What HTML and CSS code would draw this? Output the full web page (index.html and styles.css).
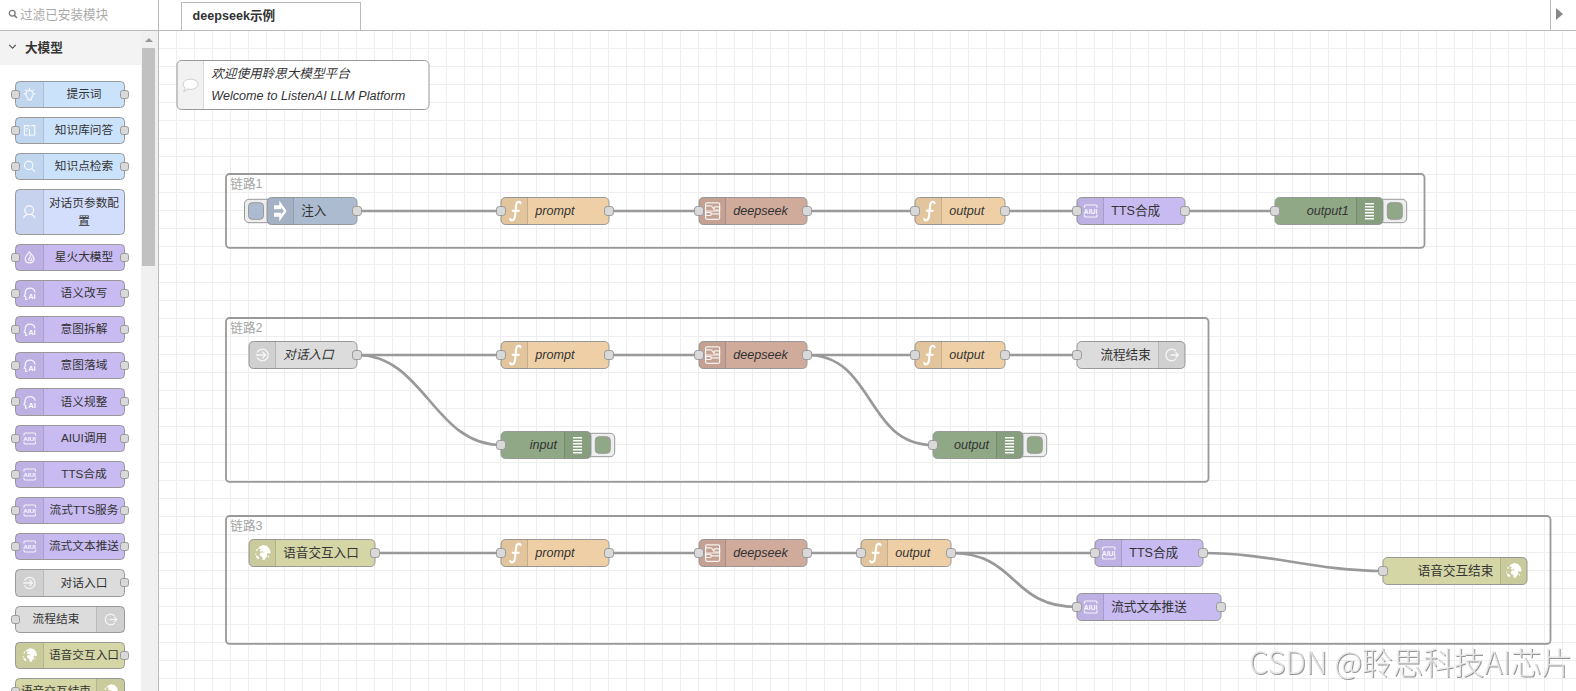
FILE: index.html
```html
<!DOCTYPE html>
<html lang="zh-CN">
<head>
<meta charset="utf-8">
<title>deepseek示例</title>
<link rel="stylesheet" href="styles.css">
</head>
<body>
<svg class="defs" width="0" height="0" aria-hidden="true">
  <defs>
    <symbol id="i-inject" viewBox="0 0 27 27"><path fill="#fff" fill-rule="evenodd" d="M7 7.8H12.3V3L19.6 13.5L12.3 24V19.2H7V15.3H14.2V17.2L16.8 13.5L14.2 9.8V11.7H7Z"/></symbol>
    <symbol id="i-fn" viewBox="0 0 27 27"><g fill="none" stroke="#fff" stroke-width="2.1" stroke-linecap="round"><path d="M19.6 5.6C19.2 3.8 15.8 3.6 15.2 7.2L13.9 19.5C13.4 23.3 9.8 23.6 9.2 21.6"/><path stroke-linecap="butt" d="M10.8 13.3H18.6"/></g></symbol>
    <symbol id="i-sub" viewBox="0 0 27 27"><g fill="none" stroke="#fff" stroke-opacity=".85" stroke-width="1.2"><rect x="6.6" y="5.4" width="14" height="16.4" rx="1.2"/><path d="M7 8.3H11.5Q13 8.3 13.4 9.6Q13.8 10.9 15 10.9M12 16.4H20.5M7 13.5H20.5"/><rect x="15" y="9.3" width="5.6" height="3.2" rx=".8"/><rect x="6.6" y="14.8" width="5.4" height="3.2" rx=".8"/></g></symbol>
    <symbol id="i-debug" viewBox="0 0 27 27"><path stroke="#fff" stroke-width="1.4" d="M9 6.3h9M9 9.3h9M9 12.3h9M9 15.3h9M9 18.3h9M9 21.3h9"/></symbol>
    <symbol id="i-aiui" viewBox="0 0 27 27"><g fill="none" stroke="#fff" stroke-opacity=".85" stroke-width="1.2"><path d="M7.5 10.3V8.8Q7.5 7.5 8.8 7.5H18.7Q20 7.5 20 8.8V10.3M7.5 17V18.2Q7.5 19.5 8.8 19.5H18.7Q20 19.5 20 18.2V17"/></g><text class="tiny" x="6.8" y="16.1" textLength="13.6" lengthAdjust="spacingAndGlyphs">AIUI</text></symbol>
    <symbol id="i-ai" viewBox="0 0 27 27"><path fill="none" stroke="#fff" stroke-opacity=".85" stroke-width="1.3" d="M11.2 19.8H9.4V17.2L7.8 16.4L8.9 13.6C8.4 9.6 10.8 7.8 14 7.8C17 7.8 19 9.6 19.4 12.2"/><text class="tiny ai" x="12.2" y="19.8" textLength="8" lengthAdjust="spacingAndGlyphs">AI</text></symbol>
    <symbol id="i-in" viewBox="0 0 27 27"><g fill="none" stroke="#fff" stroke-opacity=".8" stroke-width="1.3"><path d="M8.2 11A5.8 5.8 0 1 1 8.2 16M7 13.5H16.4M13.4 10.3L16.6 13.5L13.4 16.7"/></g></symbol>
    <symbol id="i-out" viewBox="0 0 27 27"><g fill="none" stroke="#fff" stroke-opacity=".8" stroke-width="1.3"><path d="M18 9.6A5.8 5.8 0 1 0 18 17.4M12.6 13.5H20.2M17.6 10.8L20.4 13.5L17.6 16.2"/></g></symbol>
    <symbol id="i-globe" viewBox="0 0 27 27"><path fill="#fff" d="M10.4 7.2L14 5.6L18 6.6L20.6 9.4L21.6 13.2L20 14.6L19.2 13.2L17.8 14.6L18.6 16.4L16.6 18.6L15.6 20.6L13.6 20.2L13.4 17.4L11.2 16.6L10.6 14.4L12.6 12.8L15.6 13.2L13.4 11.8L11.6 12.2L10.6 10.8L12.4 9.4L9.2 9.2Z"/><path fill="#fff" d="M7.2 9.8l1.4-.6.2 1.6-1.4 1zM6 14.4l1.1-.6.4 1-.9.8zM6.6 16.4l1.6-.3 2 1.9-.5 1.6-1.6-.6zM19 17l1-.7.1 1.2-1 .9z"/></symbol>
    <symbol id="i-bulb" viewBox="0 0 27 27"><g fill="none" stroke="#fff" stroke-opacity=".85" stroke-width="1.2"><path d="M11.7 17.2C8.2 14.6 9.4 9 13.5 9S18.8 14.6 15.3 17.2V19.3H11.7ZM13.5 6.5V8M7 12.8H8.8M18.2 12.8H20M8.6 8.2L9.8 9.4M18.4 8.2L17.2 9.4"/></g></symbol>
    <symbol id="i-book" viewBox="0 0 27 27"><g fill="none" stroke="#fff" stroke-opacity=".85" stroke-width="1.2"><path d="M12 18.3H8V8.2H13V10M13.5 12V19.3M15 8.2H19.2V18.3H14.5L13.5 19.3M9.5 11.3H12M9.5 13.5H10.8"/></g></symbol>
    <symbol id="i-search" viewBox="0 0 27 27"><g fill="none" stroke="#fff" stroke-opacity=".85" stroke-width="1.3"><circle cx="12.6" cy="12.3" r="4.5"/><path d="M15.9 15.6L19.5 19.3"/></g></symbol>
    <symbol id="i-user" viewBox="0 0 27 27"><g fill="none" stroke="#fff" stroke-opacity=".85" stroke-width="1.3"><circle cx="13.2" cy="11.7" r="4.4"/><path d="M7.5 19.5C8.3 17.6 9.8 16.5 11.2 15.9M15.2 15.9C17 16.5 18.2 17.6 19 19.5"/></g></symbol>
    <symbol id="i-fire" viewBox="0 0 27 27"><g fill="none" stroke="#fff" stroke-opacity=".85" stroke-width="1.3"><path d="M13 7C13.5 9.3 8.7 11 8.8 14.9C8.9 17.8 11 19.4 13.6 19.4C16.4 19.4 18.5 17.6 18.4 14.7C18.3 12 15.5 10.6 13 7ZM14.2 10.6C15.4 13.6 12.6 14.4 12.2 16.6M15.8 13.8C16.5 16 15 17.2 13.4 17"/></g></symbol>
    <symbol id="i-comment" viewBox="0 0 27 27"><path fill="#fff" stroke="#ccc" stroke-width="1" d="M14 7.7C18 7.7 21.2 9.8 21.2 12.8S18 17.8 14 17.8C12.9 17.8 11.9 17.7 11 17.4C9.9 18.9 8.3 19.8 6.6 19.9C7.7 18.9 8.3 17.8 8.4 16.4C7 15.5 6.3 14.2 6.3 12.8C6.3 9.8 9.7 7.7 14 7.7Z"/></symbol>
    <symbol id="port" viewBox="0 0 10 10"><rect x=".5" y=".5" width="9" height="9" rx="2.7" fill="#d9d9d9" stroke="#999"/></symbol>
    <pattern id="grid" width="18" height="18" patternUnits="userSpaceOnUse" x="176" y="48"><path fill="#eee" d="M0 0H18V1H1V18H0Z"/></pattern>
  </defs>
</svg>

<div class="editor">
  <aside class="palette">
    <div class="search">
      <svg width="10" height="10" viewBox="0 0 10 10"><circle cx="4.2" cy="4.2" r="2.9" fill="none" stroke="#777" stroke-width="1.3"/><path d="M6.3 6.3L9 9" stroke="#777" stroke-width="1.5"/></svg>
      <span>过滤已安装模块</span>
    </div>
    <div class="scroll">
      <div class="list">
        <div class="category"><svg width="9" height="6" viewBox="0 0 9 6"><path d="M1.2 .8L4.5 4.2L7.8 .8" fill="none" stroke="#555" stroke-width="1.2"/></svg><b>大模型</b></div>
        <div class="nodes">
          <div class="pn blue in out"><svg><use href="#i-bulb"/></svg><span>提示词</span></div>
          <div class="pn blue in out"><svg><use href="#i-book"/></svg><span>知识库问答</span></div>
          <div class="pn blue in out"><svg><use href="#i-search"/></svg><span>知识点检索</span></div>
          <div class="pn peri double"><svg><use href="#i-user"/></svg><span>对话页参数配<br>置</span></div>
          <div class="pn purple in out"><svg><use href="#i-fire"/></svg><span>星火大模型</span></div>
          <div class="pn purple in out"><svg><use href="#i-ai"/></svg><span>语义改写</span></div>
          <div class="pn purple in out"><svg><use href="#i-ai"/></svg><span>意图拆解</span></div>
          <div class="pn purple in out"><svg><use href="#i-ai"/></svg><span>意图落域</span></div>
          <div class="pn purple in out tall"><svg><use href="#i-ai"/></svg><span>语义规整</span></div>
          <div class="pn purple in out"><svg><use href="#i-aiui"/></svg><span>AIUI调用</span></div>
          <div class="pn purple in out"><svg><use href="#i-aiui"/></svg><span>TTS合成</span></div>
          <div class="pn purple in out"><svg><use href="#i-aiui"/></svg><span>流式TTS服务</span></div>
          <div class="pn purple in out"><svg><use href="#i-aiui"/></svg><span>流式文本推送</span></div>
          <div class="pn gray out tall"><svg><use href="#i-in"/></svg><span>对话入口</span></div>
          <div class="pn gray in right"><svg><use href="#i-out"/></svg><span>流程结束</span></div>
          <div class="pn olive out"><svg><use href="#i-globe"/></svg><span>语音交互入口</span></div>
          <div class="pn olive in right"><svg><use href="#i-globe"/></svg><span>语音交互结束</span></div>
        </div>
      </div>
      <div class="scrollbar"><i class="up"></i><i class="thumb"></i></div>
    </div>
  </aside>

  <main class="workspace">
    <div class="tabs"><div class="tab">deepseek示例</div><div class="tab-next"><i></i></div></div>
    <svg class="canvas" viewBox="159 31 1417 660">
      <rect x="159" y="31" width="1417" height="660" fill="url(#grid)"/>

      <g class="group">
        <rect x="226" y="174" width="1198.5" height="73.8" rx="3.6"/><text x="230.3" y="188">链路1</text>
        <rect x="226" y="318" width="982.5" height="163.8" rx="3.6"/><text x="230.3" y="332">链路2</text>
        <rect x="226" y="516" width="1324.5" height="127.8" rx="3.6"/><text x="230.3" y="530">链路3</text>
      </g>

      <g class="wire">
        <path d="M357 211H501M609 211H699M807 211H915M1005 211H1077M1185 211H1275"/>
        <path d="M357 355H501M609 355H699M807 355H915M1005 355H1077"/>
        <path d="M357 355C424.5 355 433.5 445 501 445M807 355C874.5 355 865.5 445 933 445"/>
        <path d="M375 553H501M609 553H699M807 553H861M951 553H1095"/>
        <path d="M951 553C1018.5 553 1009.5 607 1077 607M1203 553C1270.5 553 1315.5 571 1383 571"/>
      </g>

      <g class="node">
        <rect x="177" y="60.5" width="252" height="49" rx="4.5" fill="#fff"/>
        <path class="shade" d="M203.5 61V109H181.5Q177.5 109 177.5 105V65Q177.5 61 181.5 61Z"/><path class="div" d="M203.5 61V109"/>
        <use href="#i-comment" x="176.8" y="71.5" width="27" height="27"/>
        <text class="it" x="211.2" y="78">欢迎使用聆思大模型平台</text>
        <text class="it" x="211.2" y="100" textLength="194">Welcome to ListenAI LLM Platform</text>
      </g>

      <!-- flow 1 -->
      <g class="node" transform="translate(267 197.5)">
        <rect class="btn" x="-22.5" y="1.8" width="28.8" height="23.4" rx="4.5"/><rect x="-18.5" y="5.2" width="15" height="16.6" rx="3.6" fill="#adbbd0"/>
        <rect width="90" height="27" rx="4.5" fill="#adbbd0"/><path class="shade" d="M27 0V27H4.5Q0 27 0 22.5V4.5Q0 0 4.5 0Z"/><path class="div" d="M26.5 0V27"/>
        <use href="#i-inject" width="27" height="27"/><text x="34.2" y="17.4">注入</text>
        <use href="#port" x="85" y="8.5" width="10" height="10"/>
      </g>
      <g class="node" transform="translate(501 197.5)">
        <rect width="108" height="27" rx="4.5" fill="#efd0a6"/><path class="shade" d="M27 0V27H4.5Q0 27 0 22.5V4.5Q0 0 4.5 0Z"/><path class="div" d="M26.5 0V27"/>
        <use href="#i-fn" width="27" height="27"/><text class="it" x="34.2" y="17.5">prompt</text>
        <use href="#port" x="-5" y="8.5" width="10" height="10"/><use href="#port" x="103" y="8.5" width="10" height="10"/>
      </g>
      <g class="node" transform="translate(699 197.5)">
        <rect width="108" height="27" rx="4.5" fill="#d0aa9b"/><path class="shade" d="M27 0V27H4.5Q0 27 0 22.5V4.5Q0 0 4.5 0Z"/><path class="div" d="M26.5 0V27"/>
        <use href="#i-sub" width="27" height="27"/><text class="it" x="34.2" y="17.5">deepseek</text>
        <use href="#port" x="-5" y="8.5" width="10" height="10"/><use href="#port" x="103" y="8.5" width="10" height="10"/>
      </g>
      <g class="node" transform="translate(915 197.5)">
        <rect width="90" height="27" rx="4.5" fill="#efd0a6"/><path class="shade" d="M27 0V27H4.5Q0 27 0 22.5V4.5Q0 0 4.5 0Z"/><path class="div" d="M26.5 0V27"/>
        <use href="#i-fn" width="27" height="27"/><text class="it" x="34.2" y="17.5">output</text>
        <use href="#port" x="-5" y="8.5" width="10" height="10"/><use href="#port" x="85" y="8.5" width="10" height="10"/>
      </g>
      <g class="node" transform="translate(1077 197.5)">
        <rect width="108" height="27" rx="4.5" fill="#c8bbf1"/><path class="shade" d="M27 0V27H4.5Q0 27 0 22.5V4.5Q0 0 4.5 0Z"/><path class="div" d="M26.5 0V27"/>
        <use href="#i-aiui" width="27" height="27"/><text x="34.2" y="17.4">TTS合成</text>
        <use href="#port" x="-5" y="8.5" width="10" height="10"/><use href="#port" x="103" y="8.5" width="10" height="10"/>
      </g>
      <g class="node" transform="translate(1275 197.5)">
        <rect class="btn" x="102.9" y="1.8" width="28.8" height="23.4" rx="4.5"/><rect x="112.3" y="5.2" width="15" height="16.6" rx="3.6" fill="#90a886"/>
        <rect width="108" height="27" rx="4.5" fill="#90a886"/><path class="shade" d="M81 0V27H103.5Q108 27 108 22.5V4.5Q108 0 103.5 0Z"/><path class="div" d="M81.5 0V27"/>
        <use href="#i-debug" x="81" width="27" height="27"/><text class="it end" x="73.8" y="17.5">output1</text>
        <use href="#port" x="-5" y="8.5" width="10" height="10"/>
      </g>

      <!-- flow 2 -->
      <g class="node" transform="translate(249 341.5)">
        <rect width="108" height="27" rx="4.5" fill="#dcdcdc"/><path class="shade" d="M27 0V27H4.5Q0 27 0 22.5V4.5Q0 0 4.5 0Z"/><path class="div" d="M26.5 0V27"/>
        <use href="#i-in" width="27" height="27"/><text class="it" x="34.2" y="17.4">对话入口</text>
        <use href="#port" x="103" y="8.5" width="10" height="10"/>
      </g>
      <g class="node" transform="translate(501 341.5)">
        <rect width="108" height="27" rx="4.5" fill="#efd0a6"/><path class="shade" d="M27 0V27H4.5Q0 27 0 22.5V4.5Q0 0 4.5 0Z"/><path class="div" d="M26.5 0V27"/>
        <use href="#i-fn" width="27" height="27"/><text class="it" x="34.2" y="17.5">prompt</text>
        <use href="#port" x="-5" y="8.5" width="10" height="10"/><use href="#port" x="103" y="8.5" width="10" height="10"/>
      </g>
      <g class="node" transform="translate(699 341.5)">
        <rect width="108" height="27" rx="4.5" fill="#d0aa9b"/><path class="shade" d="M27 0V27H4.5Q0 27 0 22.5V4.5Q0 0 4.5 0Z"/><path class="div" d="M26.5 0V27"/>
        <use href="#i-sub" width="27" height="27"/><text class="it" x="34.2" y="17.5">deepseek</text>
        <use href="#port" x="-5" y="8.5" width="10" height="10"/><use href="#port" x="103" y="8.5" width="10" height="10"/>
      </g>
      <g class="node" transform="translate(915 341.5)">
        <rect width="90" height="27" rx="4.5" fill="#efd0a6"/><path class="shade" d="M27 0V27H4.5Q0 27 0 22.5V4.5Q0 0 4.5 0Z"/><path class="div" d="M26.5 0V27"/>
        <use href="#i-fn" width="27" height="27"/><text class="it" x="34.2" y="17.5">output</text>
        <use href="#port" x="-5" y="8.5" width="10" height="10"/><use href="#port" x="85" y="8.5" width="10" height="10"/>
      </g>
      <g class="node" transform="translate(1077 341.5)">
        <rect width="108" height="27" rx="4.5" fill="#dcdcdc"/><path class="shade" d="M81 0V27H103.5Q108 27 108 22.5V4.5Q108 0 103.5 0Z"/><path class="div" d="M81.5 0V27"/>
        <use href="#i-out" x="81" width="27" height="27"/><text class="end" x="73.8" y="17.4">流程结束</text>
        <use href="#port" x="-5" y="8.5" width="10" height="10"/>
      </g>
      <g class="node" transform="translate(501 431.5)">
        <rect class="btn" x="84.9" y="1.8" width="28.8" height="23.4" rx="4.5"/><rect x="94.3" y="5.2" width="15" height="16.6" rx="3.6" fill="#90a886"/>
        <rect width="90" height="27" rx="4.5" fill="#90a886"/><path class="shade" d="M63 0V27H85.5Q90 27 90 22.5V4.5Q90 0 85.5 0Z"/><path class="div" d="M63.5 0V27"/>
        <use href="#i-debug" x="63" width="27" height="27"/><text class="it end" x="56" y="17.5">input</text>
        <use href="#port" x="-5" y="8.5" width="10" height="10"/>
      </g>
      <g class="node" transform="translate(933 431.5)">
        <rect class="btn" x="84.9" y="1.8" width="28.8" height="23.4" rx="4.5"/><rect x="94.3" y="5.2" width="15" height="16.6" rx="3.6" fill="#90a886"/>
        <rect width="90" height="27" rx="4.5" fill="#90a886"/><path class="shade" d="M63 0V27H85.5Q90 27 90 22.5V4.5Q90 0 85.5 0Z"/><path class="div" d="M63.5 0V27"/>
        <use href="#i-debug" x="63" width="27" height="27"/><text class="it end" x="56" y="17.5">output</text>
        <use href="#port" x="-5" y="8.5" width="10" height="10"/>
      </g>

      <!-- flow 3 -->
      <g class="node" transform="translate(249 539.5)">
        <rect width="126" height="27" rx="4.5" fill="#d5d6a5"/><path class="shade" d="M27 0V27H4.5Q0 27 0 22.5V4.5Q0 0 4.5 0Z"/><path class="div" d="M26.5 0V27"/>
        <use href="#i-globe" width="27" height="27"/><text x="34.2" y="17.4">语音交互入口</text>
        <use href="#port" x="121" y="8.5" width="10" height="10"/>
      </g>
      <g class="node" transform="translate(501 539.5)">
        <rect width="108" height="27" rx="4.5" fill="#efd0a6"/><path class="shade" d="M27 0V27H4.5Q0 27 0 22.5V4.5Q0 0 4.5 0Z"/><path class="div" d="M26.5 0V27"/>
        <use href="#i-fn" width="27" height="27"/><text class="it" x="34.2" y="17.5">prompt</text>
        <use href="#port" x="-5" y="8.5" width="10" height="10"/><use href="#port" x="103" y="8.5" width="10" height="10"/>
      </g>
      <g class="node" transform="translate(699 539.5)">
        <rect width="108" height="27" rx="4.5" fill="#d0aa9b"/><path class="shade" d="M27 0V27H4.5Q0 27 0 22.5V4.5Q0 0 4.5 0Z"/><path class="div" d="M26.5 0V27"/>
        <use href="#i-sub" width="27" height="27"/><text class="it" x="34.2" y="17.5">deepseek</text>
        <use href="#port" x="-5" y="8.5" width="10" height="10"/><use href="#port" x="103" y="8.5" width="10" height="10"/>
      </g>
      <g class="node" transform="translate(861 539.5)">
        <rect width="90" height="27" rx="4.5" fill="#efd0a6"/><path class="shade" d="M27 0V27H4.5Q0 27 0 22.5V4.5Q0 0 4.5 0Z"/><path class="div" d="M26.5 0V27"/>
        <use href="#i-fn" width="27" height="27"/><text class="it" x="34.2" y="17.5">output</text>
        <use href="#port" x="-5" y="8.5" width="10" height="10"/><use href="#port" x="85" y="8.5" width="10" height="10"/>
      </g>
      <g class="node" transform="translate(1095 539.5)">
        <rect width="108" height="27" rx="4.5" fill="#c8bbf1"/><path class="shade" d="M27 0V27H4.5Q0 27 0 22.5V4.5Q0 0 4.5 0Z"/><path class="div" d="M26.5 0V27"/>
        <use href="#i-aiui" width="27" height="27"/><text x="34.2" y="17.4">TTS合成</text>
        <use href="#port" x="-5" y="8.5" width="10" height="10"/><use href="#port" x="103" y="8.5" width="10" height="10"/>
      </g>
      <g class="node" transform="translate(1077 593.5)">
        <rect width="144" height="27" rx="4.5" fill="#c8bbf1"/><path class="shade" d="M27 0V27H4.5Q0 27 0 22.5V4.5Q0 0 4.5 0Z"/><path class="div" d="M26.5 0V27"/>
        <use href="#i-aiui" width="27" height="27"/><text x="34.2" y="17.4">流式文本推送</text>
        <use href="#port" x="-5" y="8.5" width="10" height="10"/><use href="#port" x="139" y="8.5" width="10" height="10"/>
      </g>
      <g class="node" transform="translate(1383 557.5)">
        <rect width="144" height="27" rx="4.5" fill="#d5d6a5"/><path class="shade" d="M117 0V27H139.5Q144 27 144 22.5V4.5Q144 0 139.5 0Z"/><path class="div" d="M117.5 0V27"/>
        <use href="#i-globe" x="117" width="27" height="27"/><text class="end" x="110.3" y="17.4">语音交互结束</text>
        <use href="#port" x="-5" y="8.5" width="10" height="10"/>
      </g>

      <text class="mark" x="1249" y="673.5" textLength="323" lengthAdjust="spacingAndGlyphs">CSDN @聆思科技AI芯片</text>
    </svg>
  </main>
</div>
</body>
</html>
```
FILE: styles.css
```css
*, *::before, *::after { box-sizing: border-box; }
body {
  margin: 0;
  overflow: hidden;
  background: #fff;
  color: #333;
  font: 12.6px "Liberation Sans", "Noto Sans CJK SC", sans-serif;
}
.defs { position: absolute; }
.editor { display: flex; width: 1576px; height: 691px; }

.palette {
  display: flex;
  flex-direction: column;
  width: 159px;
  border-right: 1px solid #bbb;
}
.search {
  display: flex;
  align-items: center;
  gap: 2px;
  flex: 0 0 31px;
  padding: 0 0 2px 8px;
  border-bottom: 1px solid #bbb;
  color: #aaa;
  white-space: nowrap;
}
.search span { padding-bottom: 2px; }
.scroll { display: flex; flex: 1; min-height: 0; overflow: hidden; }
.list { width: 141px; }
.category {
  display: flex;
  align-items: center;
  gap: 8px;
  height: 34px;
  padding: 0 0 3px 8px;
  background: #f3f3f3;
}
.nodes { padding: 16px 0 0 15px; }

.pn {
  position: relative;
  display: flex;
  width: 110px;
  height: 27px;
  margin-bottom: 9px;
  border: 1px solid #999;
  border-radius: 4.5px;
  font-size: 11.7px;
  line-height: 18px;
}
.pn svg {
  flex: none;
  width: 28px;
  height: 100%;
  background: rgba(0, 0, 0, .05);
  border-right: 1px solid rgba(0, 0, 0, .1);
}
.pn span {
  flex: 1;
  align-self: center;
  padding-bottom: 1px;
  text-align: center;
  white-space: nowrap;
}
.pn.tall { height: 28px; }
.pn.double { height: 46px; }
.pn.right { flex-direction: row-reverse; }
.pn.right svg { border-right: 0; border-left: 1px solid rgba(0, 0, 0, .1); }
.pn.in::before, .pn.out::after {
  content: "";
  position: absolute;
  top: 8px;
  width: 9px;
  height: 9px;
  border: 1px solid #999;
  border-radius: 2.7px;
  background: #d9d9d9;
}
.pn.in::before { left: -5px; }
.pn.out::after { right: -5px; }
.blue { background: #cbe2fb; }
.peri { background: #d2defb; }
.purple { background: #c8bbf1; }
.gray { background: #dcdcdc; }
.olive { background: #d5d6a5; }

.scrollbar {
  display: flex;
  flex-direction: column;
  align-items: center;
  width: 17px;
  padding: 7px 2px 0 0;
  background: #f0f0f0;
}
.up {
  border: 4px solid transparent;
  border-top: 0;
  border-bottom-color: #999;
}
.thumb { width: 13px; height: 218px; margin-top: 6px; background: #c1c1c1; }

.workspace { display: flex; flex-direction: column; flex: 1; min-width: 0; }
.tabs {
  display: flex;
  justify-content: space-between;
  align-items: flex-end;
  height: 31px;
  padding-left: 22px;
  border-bottom: 1px solid #bbb;
}
.tab {
  width: 180px;
  height: 28px;
  padding-left: 10.5px;
  border: 1px solid #bbb;
  border-bottom: 0;
  font-weight: bold;
  line-height: 26px;
}
.tab-next {
  display: flex;
  align-items: center;
  width: 26px;
  height: 30px;
  padding: 0 0 2px 5px;
  border-left: 1px solid #bbb;
}
.tab-next i { border: 6px solid transparent; border-left: 7px solid #888; border-right: 0; }

.canvas { display: block; width: 1417px; height: 660px; }
.group rect { fill: none; stroke: #999; stroke-width: 1.8; }
.group text { fill: #a4a4a4; font-size: 12.6px; }
.wire { fill: none; stroke: #999; stroke-width: 2.7; }
.node > rect { stroke: #999; stroke-width: 1; }
.node > .btn { fill: #eee; }
.node text { fill: #333; font-size: 12.6px; }
.node .it { font-style: italic; }
.node .end { text-anchor: end; }
.shade { fill: #000; fill-opacity: .05; }
.div { fill: none; stroke: #000; stroke-opacity: .12; }
.tiny { fill: #fff !important; fill-opacity: .95; font: bold 6.5px "Liberation Sans", sans-serif !important; }
.ai { font-size: 8px !important; }
.mark {
  fill: #e8e8e8;
  fill-opacity: .9;
  font: 300 31px "Noto Sans CJK SC", sans-serif;
  filter: drop-shadow(1px 1px .5px rgba(0, 0, 0, .45));
}
```
